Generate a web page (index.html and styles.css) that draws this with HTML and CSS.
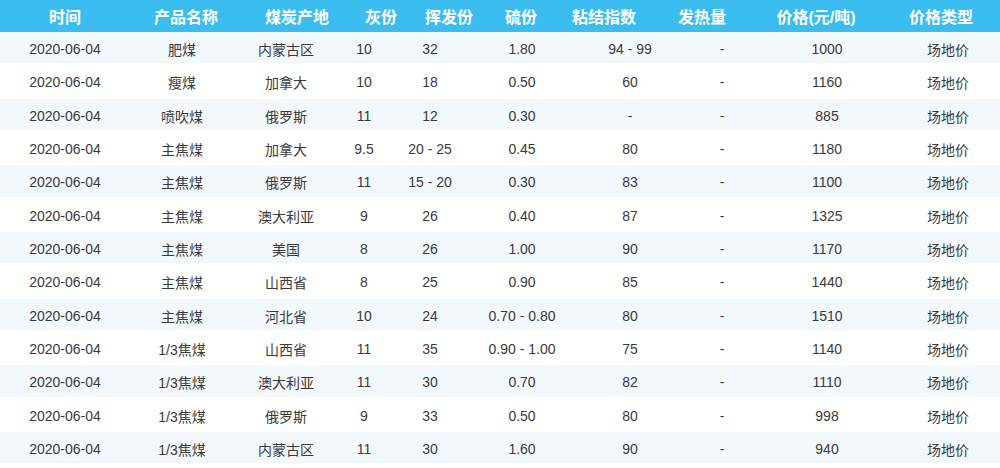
FILE: index.html
```html
<!DOCTYPE html>
<html lang="zh">
<head>
<meta charset="utf-8">
<link rel="stylesheet" href="styles.css">
</head>
<body>
<div class="table">
  <div class="head">
    <div>时间</div><div>产品名称</div><div>煤炭产地</div><div>灰份</div><div>挥发份</div><div>硫份</div><div>粘结指数</div><div>发热量</div><div>价格(元/吨)</div><div>价格类型</div>
  </div>
  <div class="body">
    <div class="row"><div>2020-06-04</div><div>肥煤</div><div>内蒙古区</div><div>10</div><div>32</div><div>1.80</div><div>94 - 99</div><div>-</div><div>1000</div><div>场地价</div></div>
    <div class="row"><div>2020-06-04</div><div>瘦煤</div><div>加拿大</div><div>10</div><div>18</div><div>0.50</div><div>60</div><div>-</div><div>1160</div><div>场地价</div></div>
    <div class="row"><div>2020-06-04</div><div>喷吹煤</div><div>俄罗斯</div><div>11</div><div>12</div><div>0.30</div><div>-</div><div>-</div><div>885</div><div>场地价</div></div>
    <div class="row"><div>2020-06-04</div><div>主焦煤</div><div>加拿大</div><div>9.5</div><div>20 - 25</div><div>0.45</div><div>80</div><div>-</div><div>1180</div><div>场地价</div></div>
    <div class="row"><div>2020-06-04</div><div>主焦煤</div><div>俄罗斯</div><div>11</div><div>15 - 20</div><div>0.30</div><div>83</div><div>-</div><div>1100</div><div>场地价</div></div>
    <div class="row"><div>2020-06-04</div><div>主焦煤</div><div>澳大利亚</div><div>9</div><div>26</div><div>0.40</div><div>87</div><div>-</div><div>1325</div><div>场地价</div></div>
    <div class="row"><div>2020-06-04</div><div>主焦煤</div><div>美国</div><div>8</div><div>26</div><div>1.00</div><div>90</div><div>-</div><div>1170</div><div>场地价</div></div>
    <div class="row"><div>2020-06-04</div><div>主焦煤</div><div>山西省</div><div>8</div><div>25</div><div>0.90</div><div>85</div><div>-</div><div>1440</div><div>场地价</div></div>
    <div class="row"><div>2020-06-04</div><div>主焦煤</div><div>河北省</div><div>10</div><div>24</div><div>0.70 - 0.80</div><div>80</div><div>-</div><div>1510</div><div>场地价</div></div>
    <div class="row"><div>2020-06-04</div><div>1/3焦煤</div><div>山西省</div><div>11</div><div>35</div><div>0.90 - 1.00</div><div>75</div><div>-</div><div>1140</div><div>场地价</div></div>
    <div class="row"><div>2020-06-04</div><div>1/3焦煤</div><div>澳大利亚</div><div>11</div><div>30</div><div>0.70</div><div>82</div><div>-</div><div>1110</div><div>场地价</div></div>
    <div class="row"><div>2020-06-04</div><div>1/3焦煤</div><div>俄罗斯</div><div>9</div><div>33</div><div>0.50</div><div>80</div><div>-</div><div>998</div><div>场地价</div></div>
    <div class="row"><div>2020-06-04</div><div>1/3焦煤</div><div>内蒙古区</div><div>11</div><div>30</div><div>1.60</div><div>90</div><div>-</div><div>940</div><div>场地价</div></div>
  </div>
</div>
</body>
</html>
```

FILE: styles.css
```css
html, body {
  margin: 0;
  padding: 0;
  background: #ffffff;
}

body {
  font-family: "Liberation Sans", "Noto Sans CJK SC", sans-serif;
  color: #3a3a3a;
}

.table {
  width: 1000px;
}

.head {
  display: grid;
  grid-template-columns: 130px 112px 110px 58px 78px 66px 100px 96px 132px 118px;
  height: 32px;
  align-items: center;
  background: #3bbdef;
  color: #ffffff;
  font-weight: bold;
  font-size: 16px;
  text-align: center;
  white-space: nowrap;
}

.body .row {
  display: grid;
  grid-template-columns: 130px 104px 104px 52px 80px 104px 112px 72px 138px 104px;
  height: 33.33px;
  box-sizing: border-box;
  padding-top: 3px;
  align-items: center;
  font-size: 14px;
  text-align: center;
  white-space: nowrap;
  border-bottom: 2px solid #ffffff;
}

.body .row:nth-child(odd) {
  background: #f2f8fc;
}
```
